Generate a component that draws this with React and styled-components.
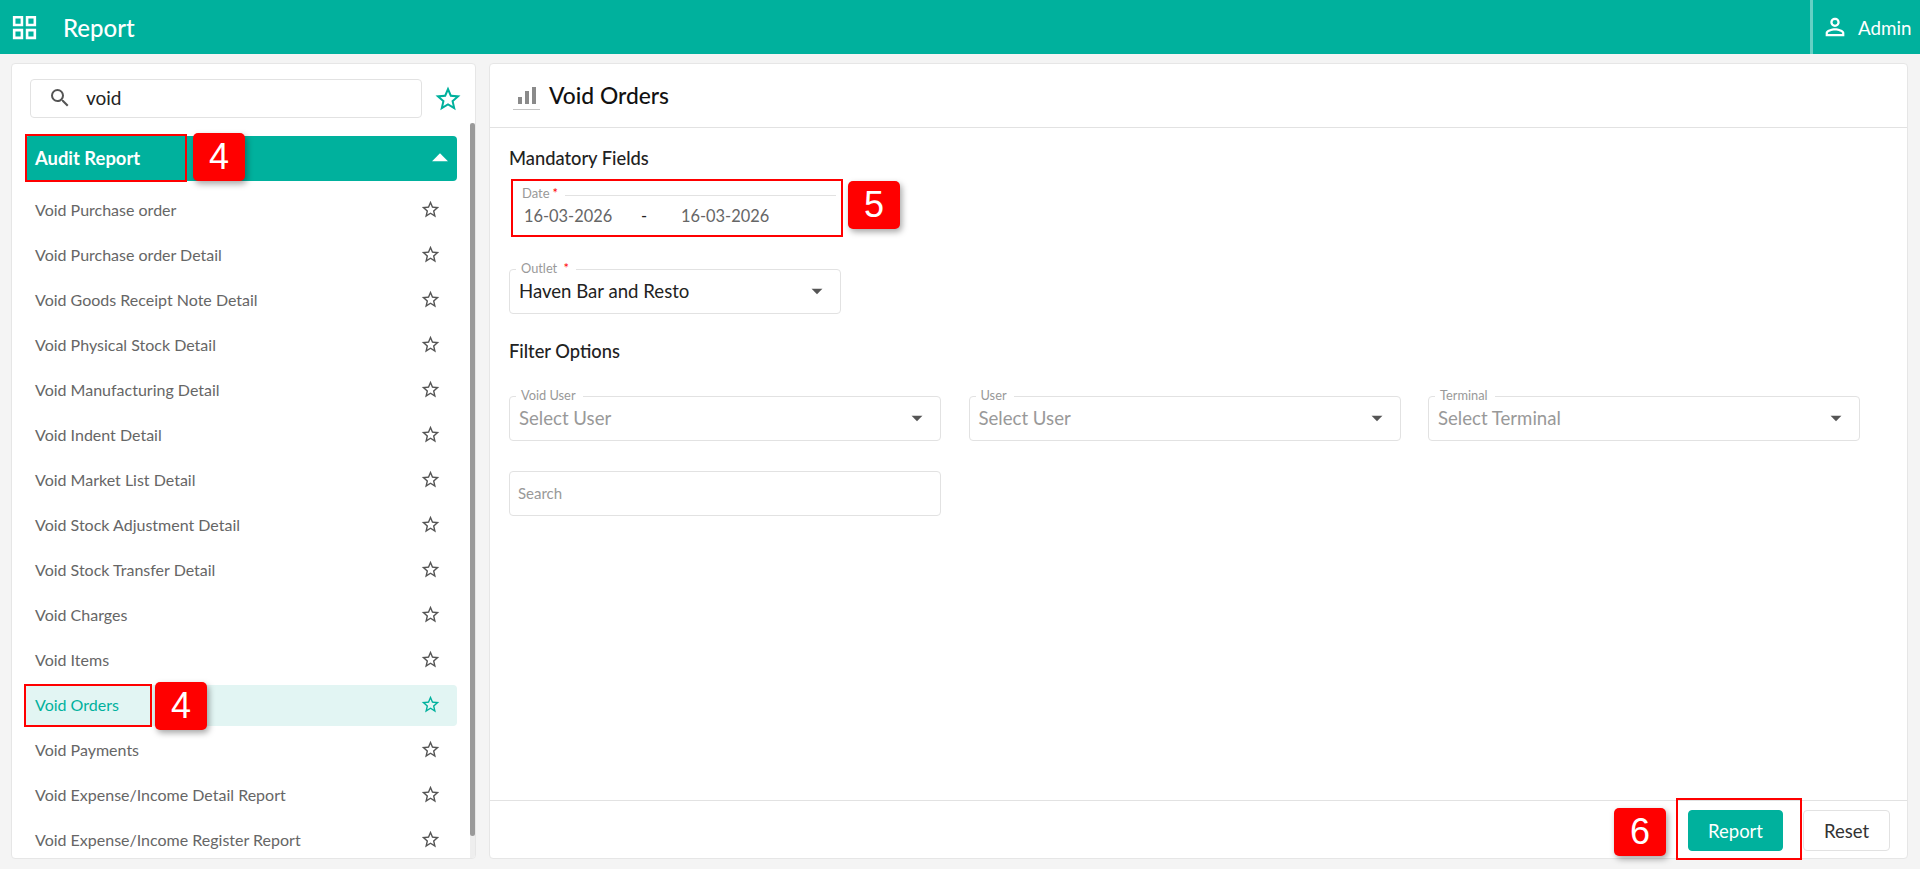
import React from 'react';
import styled, { createGlobalStyle } from 'styled-components';
import {
  MdOutlineGridView,
  MdPersonOutline,
  MdSearch,
  MdStarBorder,
  MdArrowDropDown,
  MdArrowDropUp,
} from 'react-icons/md';

const TEAL = '#00b19d';
const BORDER = '#e2e2e2';

const GlobalStyle = createGlobalStyle`
  html, body {
    margin: 0;
    height: 100%;
    overflow: hidden;
    background: #f4f4f4;
    font-family: Lato, "Open Sans", sans-serif;
  }
  * { box-sizing: border-box; }
`;

/* Top bar */
const TopBar = styled.header`
  display: flex;
  align-items: center;
  height: 54px;
  background: ${TEAL};
  color: #fff;
`;

const AppIcon = styled.div`
  display: flex;
  width: 63px;
  padding-left: 9px;
  font-size: 31px;
`;

const PageName = styled.div`
  flex: 1;
  font-size: 24px;
  font-weight: 500;
`;

const UserBox = styled.div`
  display: flex;
  align-items: center;
  gap: 9px;
  width: 110px;
  height: 54px;
  padding-left: 8px;
  border-left: 3px solid #66d0c4;
  font-size: 18.8px;

  svg {
    font-size: 28px;
  }
`;

/* Page columns */
const Main = styled.main`
  display: flex;
  gap: 13px;
  height: 815px;
  padding: 9px 12px 10px 11px;
`;

const Panel = styled.section`
  position: relative;
  background: #fff;
  border: 1px solid #e6e6e6;
  border-radius: 4px;
`;

const Sidebar = styled(Panel)`
  width: 465px;
  padding: 15px 0 0 13px;
  overflow: hidden;
`;

const SearchRow = styled.div`
  display: flex;
  align-items: center;
  gap: 11px;
  padding-left: 5px;
`;

const SearchBox = styled.div`
  display: flex;
  align-items: center;
  gap: 14px;
  width: 392px;
  height: 39px;
  padding: 0 0 2px 17px;
  border: 1px solid ${BORDER};
  border-radius: 4px;
  font-size: 19px;
  color: #222;

  svg {
    font-size: 24px;
    color: #555;
  }
`;

const FavStar = styled.div`
  display: flex;
  font-size: 30px;
  color: ${TEAL};
`;

const GroupHeader = styled.div`
  display: flex;
  align-items: center;
  justify-content: space-between;
  width: 432px;
  height: 45px;
  margin-top: 18px;
  padding: 0 0 2px 10px;
  background: ${TEAL};
  border-radius: 4px;
  color: #fff;
  font-size: 18.4px;
  font-weight: 700;

  svg {
    flex: none;
    margin-right: -2px;
    font-size: 38px;
  }
`;

const MenuList = styled.ul`
  display: flex;
  flex-direction: column;
  gap: 4px;
  width: 432px;
  margin: 9px 0 0;
  padding: 0;
  list-style: none;
`;

const MenuItem = styled.li`
  display: flex;
  align-items: center;
  justify-content: space-between;
  height: 41px;
  padding: 0 16px 2px 10px;
  border-radius: 4px;
  font-size: 16px;
  color: ${(p) => (p.$active ? TEAL : '#666')};
  background: ${(p) => (p.$active ? '#e2f5f3' : 'transparent')};

  svg {
    font-size: 21px;
    color: ${(p) => (p.$active ? TEAL : '#555')};
  }
`;

const ScrollTrack = styled.div`
  position: absolute;
  top: 59px;
  right: 0;
  bottom: 0;
  width: 5px;
  background: #eee;
`;

const ScrollThumb = styled.div`
  height: 713px;
  background: #9a9a9a;
  border-radius: 3px;
`;

/* Red annotation overlays */
const Mark = styled.div`
  position: absolute;
  left: ${(p) => p.$x}px;
  top: ${(p) => p.$y}px;
  width: ${(p) => p.$w}px;
  height: ${(p) => p.$h}px;
  border: 2px solid #f00;
  pointer-events: none;
`;

const Badge = styled.div`
  position: absolute;
  left: ${(p) => p.$x}px;
  top: ${(p) => p.$y}px;
  display: flex;
  align-items: center;
  justify-content: center;
  width: 52px;
  height: 48px;
  background: #f00;
  border-radius: 5px;
  box-shadow: 2px 3px 6px rgba(0, 0, 0, 0.35);
  color: #fff;
  font-family: "Liberation Sans", Arial, sans-serif;
  font-size: 36px;
`;

/* Report form */
const Content = styled(Panel)`
  flex: 1;
  display: flex;
  flex-direction: column;
`;

const TitleBar = styled.div`
  display: flex;
  align-items: center;
  gap: 9px;
  height: 64px;
  padding: 0 0 2px 23px;
  border-bottom: 1px solid ${BORDER};
  font-size: 22.8px;
  font-weight: 500;
  color: #111;

  svg {
    margin-top: 7px;
  }
`;

const Form = styled.div`
  flex: 1;
  padding: 19px 19px 0;
`;

const SectionTitle = styled.div`
  margin-top: ${(p) => p.$top || 0}px;
  font-size: 18.3px;
  font-weight: 500;
  line-height: 22px;
  color: #222;
`;

const DateField = styled.div`
  position: relative;
  display: flex;
  width: 324px;
  height: 46px;
  margin: 19px 0 0 3px;
  padding: 18px 0 0 12px;
  font-size: 16.4px;
  color: #666;
`;

const DateLabel = styled.div`
  position: absolute;
  top: -2px;
  left: 10px;
  right: 0;
  display: flex;
  align-items: center;
  gap: 7px;
  font-size: 13px;
  line-height: 14px;
  color: #999;

  &::after {
    content: '';
    flex: 1;
    height: 1px;
    margin-top: 4px;
    background: ${BORDER};
  }
`;

const DateValue = styled.span`
  width: 117px;
`;

const DateDash = styled.span`
  width: 40px;
  color: #222;
`;

const FieldBox = styled.div`
  position: relative;
  display: flex;
  align-items: center;
  justify-content: space-between;
  width: ${(p) => p.$width || '100%'};
  height: 45px;
  margin-top: ${(p) => p.$top || 0}px;
  padding: 0 10px 2px 9px;
  border: 1px solid ${BORDER};
  border-radius: 4px;
  font-size: 18.6px;
  color: ${(p) => (p.$muted ? '#999' : '#222')};

  svg {
    font-size: 26px;
    color: #555;
  }
`;

const FieldLabel = styled.span`
  position: absolute;
  top: -9px;
  left: 6px;
  padding: 0 7px 0 5px;
  background: #fff;
  font-size: 12.8px;
  line-height: 14px;
  color: #999;
`;

const Req = styled.span`
  color: #f00;
  margin-left: 3px;
`;

const FilterGrid = styled.div`
  display: grid;
  grid-template-columns: repeat(3, 432px);
  column-gap: 27.5px;
  margin-top: 34px;
`;

const SearchField = styled.div`
  display: flex;
  align-items: center;
  width: 432px;
  height: 45px;
  margin-top: 30px;
  padding: 0 0 2px 8px;
  border: 1px solid ${BORDER};
  border-radius: 4px;
  font-size: 15px;
  color: #999;
`;

const Footer = styled.div`
  position: relative;
  display: flex;
  justify-content: flex-end;
  align-items: center;
  gap: 20px;
  height: 58px;
  padding: 2px 17px 0 0;
  border-top: 1px solid ${BORDER};
`;

const Button = styled.button`
  width: ${(p) => p.$width}px;
  height: 41px;
  padding: 0;
  border: 1px solid ${(p) => (p.$primary ? TEAL : BORDER)};
  border-radius: 4px;
  background: ${(p) => (p.$primary ? TEAL : '#fff')};
  color: ${(p) => (p.$primary ? '#fff' : '#333')};
  font-family: inherit;
  font-size: 18.5px;
`;

const BarsIcon = () => (
  <svg width="27" height="24" viewBox="0 0 27 24" fill="#8a8a8a">
    <rect x="5" y="11" width="4" height="7" />
    <rect x="12" y="5" width="4" height="13" />
    <rect x="19" y="1" width="4" height="17" />
    <rect x="0" y="23" width="27" height="1" fill="#c4c4c4" />
  </svg>
);

const items = [
  'Void Purchase order',
  'Void Purchase order Detail',
  'Void Goods Receipt Note Detail',
  'Void Physical Stock Detail',
  'Void Manufacturing Detail',
  'Void Indent Detail',
  'Void Market List Detail',
  'Void Stock Adjustment Detail',
  'Void Stock Transfer Detail',
  'Void Charges',
  'Void Items',
  'Void Orders',
  'Void Payments',
  'Void Expense/Income Detail Report',
  'Void Expense/Income Register Report',
];

const filters = [
  { label: 'Void User', value: 'Select User' },
  { label: 'User', value: 'Select User' },
  { label: 'Terminal', value: 'Select Terminal' },
];

const App = () => (
  <>
    <GlobalStyle />
    <TopBar>
      <AppIcon>
        <MdOutlineGridView />
      </AppIcon>
      <PageName>Report</PageName>
      <UserBox>
        <MdPersonOutline />
        Admin
      </UserBox>
    </TopBar>
    <Main>
      <Sidebar>
        <SearchRow>
          <SearchBox>
            <MdSearch />
            void
          </SearchBox>
          <FavStar>
            <MdStarBorder />
          </FavStar>
        </SearchRow>
        <GroupHeader>
          Audit Report
          <MdArrowDropUp />
        </GroupHeader>
        <MenuList>
          {items.map((name) => (
            <MenuItem key={name} $active={name === 'Void Orders'}>
              {name}
              <MdStarBorder />
            </MenuItem>
          ))}
        </MenuList>
        <ScrollTrack>
          <ScrollThumb />
        </ScrollTrack>
        <Mark $x={13} $y={70} $w={162} $h={48} />
        <Badge $x={181} $y={69}>4</Badge>
        <Mark $x={12} $y={620} $w={128} $h={43} />
        <Badge $x={143} $y={618}>4</Badge>
      </Sidebar>
      <Content>
        <TitleBar>
          <BarsIcon />
          Void Orders
        </TitleBar>
        <Form>
          <SectionTitle>Mandatory Fields</SectionTitle>
          <DateField>
            <DateLabel>
              <span>
                Date<Req>*</Req>
              </span>
            </DateLabel>
            <DateValue>16-03-2026</DateValue>
            <DateDash>-</DateDash>
            <DateValue>16-03-2026</DateValue>
          </DateField>
          <FieldBox $width="332px" $top={35}>
            <FieldLabel>
              Outlet <Req>*</Req>
            </FieldLabel>
            Haven Bar and Resto
            <MdArrowDropDown />
          </FieldBox>
          <SectionTitle $top={26}>Filter Options</SectionTitle>
          <FilterGrid>
            {filters.map((f) => (
              <FieldBox key={f.label} $muted>
                <FieldLabel>{f.label}</FieldLabel>
                {f.value}
                <MdArrowDropDown />
              </FieldBox>
            ))}
          </FilterGrid>
          <SearchField>Search</SearchField>
        </Form>
        <Footer>
          <Button $primary $width={95}>
            Report
          </Button>
          <Button $width={87}>Reset</Button>
        </Footer>
        <Mark $x={21} $y={115} $w={332} $h={58} />
        <Badge $x={358} $y={117}>5</Badge>
        <Mark $x={1186} $y={734} $w={126} $h={62} />
        <Badge $x={1124} $y={744}>6</Badge>
      </Content>
    </Main>
  </>
);

export default App;
